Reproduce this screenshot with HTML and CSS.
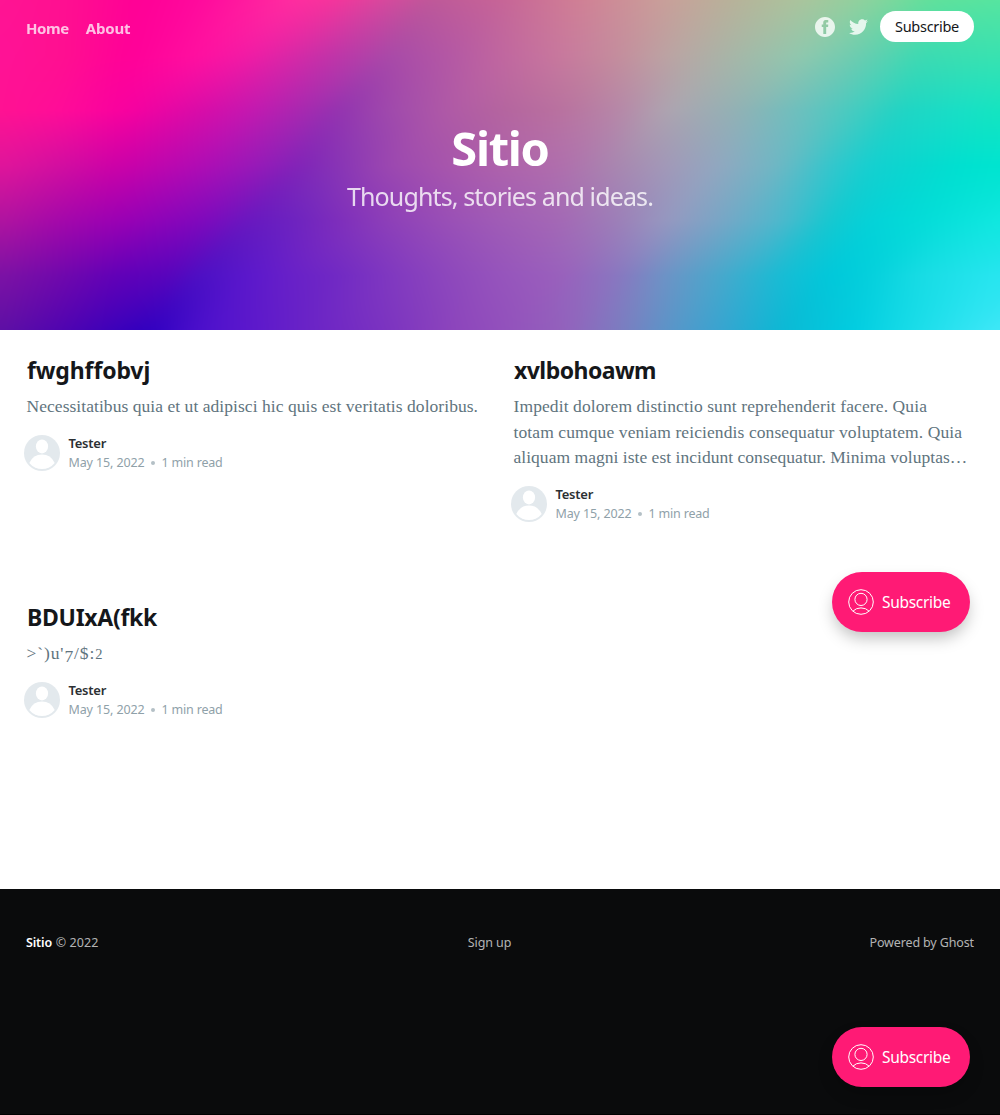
FILE: index.html
```html
<!DOCTYPE html>
<html lang="en">
<head>
<meta charset="utf-8">
<title>Sitio</title>
<link rel="stylesheet" href="styles.css">
</head>
<body>
<svg class="sprite" aria-hidden="true">
  <symbol id="avatar" viewBox="0 0 36 36">
    <circle cx="18" cy="18" r="18" fill="#e3e9ed"/>
    <ellipse cx="18" cy="11.4" rx="6.1" ry="7" fill="#fff"/>
    <path d="M5.3 28Q9.3 19.6 18 19.6T30.7 28A16.4 16.4 0 0 1 5.3 28z" fill="#fff"/>
  </symbol>
  <symbol id="member" viewBox="0 0 26 26">
    <g fill="none" stroke="#fff" stroke-width="1">
      <circle cx="13" cy="13" r="12.3"/>
      <circle cx="13" cy="10.4" r="6.1"/>
      <path d="M4.9 22.2Q8 18.9 13 18.9T21.1 22.2"/>
    </g>
  </symbol>
</svg>

<header class="cover">
  <canvas class="mesh" width="1000" height="330" aria-hidden="true"></canvas>
  <nav class="nav">
    <div class="nav-links">
      <a class="home">Home</a>
      <a>About</a>
    </div>
    <div class="nav-actions">
      <svg class="facebook" viewBox="0 0 32 32"><path d="M16 0c8.837 0 16 7.163 16 16s-7.163 16-16 16S0 24.837 0 16 7.163 0 16 0zm5.204 4.911h-3.546c-2.103 0-4.443.885-4.443 3.934.01 1.062 0 2.08 0 3.225h-2.433v3.872h2.509v11.147h4.61v-11.22h3.042l.275-3.81h-3.397s.007-1.695 0-2.187c0-1.205 1.253-1.136 1.329-1.136h2.054V4.911z"/></svg>
      <svg class="twitter" viewBox="0 2 24 20"><path d="M24 4.557c-.883.392-1.832.656-2.828.775 1.017-.609 1.798-1.574 2.165-2.724-.951.564-2.005.974-3.127 1.195-.897-.957-2.178-1.555-3.594-1.555-3.179 0-5.515 2.966-4.797 6.045-4.091-.205-7.719-2.165-10.148-5.144-1.29 2.213-.669 5.108 1.523 6.574-.806-.026-1.566-.247-2.229-.616-.054 2.281 1.581 4.415 3.949 4.89-.693.188-1.452.232-2.224.084.626 1.956 2.444 3.379 4.6 3.419-2.07 1.623-4.678 2.348-7.29 2.04 2.179 1.397 4.768 2.212 7.548 2.212 9.142 0 14.307-7.721 13.995-14.646.962-.695 1.797-1.562 2.457-2.549z"/></svg>
      <a class="nav-button">Subscribe</a>
    </div>
  </nav>
  <div class="hero">
    <h1>Sitio</h1>
    <p>Thoughts, stories and ideas.</p>
  </div>
</header>

<main class="feed">
  <article class="card">
    <h2 class="t-first">fwghffobvj</h2>
    <p class="excerpt">Necessitatibus quia et ut adipisci hic quis est veritatis doloribus.</p>
    <div class="byline">
      <svg class="avatar"><use href="#avatar"/></svg>
      <div>
        <div class="author">Tester</div>
        <div class="meta"><span>May 15, 2022</span><i class="dot"></i><span class="read">1 min read</span></div>
      </div>
    </div>
  </article>
  <article class="card">
    <h2 class="t-second">xvlbohoawm</h2>
    <p class="excerpt excerpt-long">Impedit dolorem distinctio sunt reprehenderit facere. Quia<br>totam cumque veniam reiciendis consequatur voluptatem. Quia<br><span class="last-line">aliquam magni iste est incidunt consequatur. Minima voluptas…</span></p>
    <div class="byline">
      <svg class="avatar"><use href="#avatar"/></svg>
      <div>
        <div class="author">Tester</div>
        <div class="meta"><span>May 15, 2022</span><i class="dot"></i><span class="read">1 min read</span></div>
      </div>
    </div>
  </article>
  <article class="card">
    <h2 class="t-third">BDUIxA(fkk</h2>
    <p class="excerpt excerpt-symbols">&gt;`)u'<span class="old">7</span>/$:<span class="small">2</span></p>
    <div class="byline">
      <svg class="avatar"><use href="#avatar"/></svg>
      <div>
        <div class="author">Tester</div>
        <div class="meta"><span>May 15, 2022</span><i class="dot"></i><span class="read">1 min read</span></div>
      </div>
    </div>
  </article>
</main>

<footer class="footer">
  <div><strong>Sitio</strong> <span class="copy">© 2022</span></div>
  <a class="signup">Sign up</a>
  <a class="powered">Powered by Ghost</a>
</footer>

<a class="portal portal-upper"><svg><use href="#member"/></svg><span>Subscribe</span></a>
<a class="portal portal-lower"><svg><use href="#member"/></svg><span>Subscribe</span></a>
<script src="mesh.js"></script>
</body>
</html>
```
FILE: mesh.js
```js
// Paints the cover's colour mesh: seven evenly spaced rows of colour stops,
// blended vertically along slanted lines so that the ridges run diagonally.
const rows = [
  '0 ff1493,60 ff1090,140 ff0096,200 ff0a9d,290 ff2ca0,333 f4349c,390 d24b9d,430 bd5899,500 c66497,580 d08095,666 c8a09a,740 b5b49a,800 aac49d,860 8fd19e,930 5fe09c,1000 55e5a0',
  '0 ff1296,60 ff1090,130 ff0098,200 ff10a0,250 f01ca5,333 c034a8,390 a84aa8,450 b458a4,500 c0669f,560 c8789d,620 c48e9d,666 bca3a3,740 a4b8a8,800 90c8ae,860 6acdb0,920 3cdab2,1000 38e3b0',
  '0 ff1292,60 ff0c98,125 f8009f,200 d80ca8,250 c418b0,300 a828b0,340 9234b0,390 a04aac,450 b05aa6,500 b4649f,560 b9719f,620 b688a8,666 aea4b0,740 90b2b5,800 6cc0be,850 48cbc0,900 20d4c4,960 18dfc6,1000 14e5c0',
  '0 e0159a,60 d20ea0,120 cc00a8,200 b00cb4,250 9a18b8,300 8024b8,333 8632b6,390 9c48b0,450 a856ac,500 ae62ab,560 b06eac,620 a888b0,666 a299b8,720 90a8c0,780 6cb8c4,830 34c6cc,870 14d0d0,920 08d8cf,960 00e0d0,1000 00e5d0',
  '0 b0149f,60 a408aa,120 9a00b4,200 8008bc,250 6818c0,290 6c22c0,333 7c2cbc,390 8e40b8,450 9a50b6,500 a05cb6,560 a468b5,620 9c80b8,666 9698c0,720 78a6c6,780 4eb8cc,830 14c8d0,870 04d2d8,920 04dcd8,1000 10e8e0',
  '0 7c12a4,60 7008ac,120 6000b8,170 5804bc,200 4c10c4,250 5c18cc,290 6820c8,333 7028c4,390 8038c0,450 8e48bc,500 9654bc,560 9a60bc,620 8878c0,666 6c94c6,720 48a8cc,780 18bcd4,830 00c8da,870 04d0dc,920 18dce4,1000 28e6f0',
  '0 5e10a4,60 5004b0,125 3800bc,150 3000c0,200 4c10cc,250 5c18cc,333 7028c4,390 7c34c0,450 8c44bc,500 9250bc,560 9460bc,620 7c7cc0,666 5c94c8,720 38a4d0,780 0cb8d4,850 00cce0,910 18dce8,1000 40e8f8'
];
const WIDTH = 1000, HEIGHT = 330, STEP = 55;

// Expand each row of stops to one colour per pixel.
const ramps = rows.map(row => {
  const stops = row.split(',').map(s => {
    const [x, hex] = s.split(' ');
    const n = parseInt(hex, 16);
    return [+x, n >> 16, n >> 8 & 255, n & 255];
  });
  const raw = [];
  for (let x = 0, i = 0; x <= WIDTH; x++) {
    if (x > stops[i + 1][0]) i++;
    const a = stops[i], b = stops[i + 1], t = (x - a[0]) / (b[0] - a[0]);
    raw.push([1, 2, 3].map(c => a[c] + (b[c] - a[c]) * t));
  }
  // Soften the joints between stops.
  return raw.map((_, x) => [0, 1, 2].map(c => {
    let sum = 0;
    for (let d = -16; d <= 16; d++) sum += raw[Math.max(0, Math.min(WIDTH, x + d))][c];
    return sum / 33;
  }));
});

function at(row, x) {
  const p = Math.max(0, Math.min(WIDTH - 0.01, x)), i = Math.floor(p), t = p - i;
  return ramps[row][i].map((v, c) => v + (ramps[row][i + 1][c] - v) * t);
}

const slants = [[0, 0.1], [100, 0.25], [220, 0.85], [450, 0.85], [600, 0.6], [1000, 0.6]];
function slant(x) {
  const i = slants.findIndex(s => s[0] > x);
  const a = slants[i - 1], b = slants[i];
  return a[1] + (b[1] - a[1]) * (x - a[0]) / (b[0] - a[0]);
}

const ctx = document.querySelector('.mesh').getContext('2d');
const image = ctx.createImageData(WIDTH, HEIGHT);
for (let x = 0; x < WIDTH; x++) {
  const s = slant(x);
  for (let y = 0; y < HEIGHT; y++) {
    const k = Math.floor(y / STEP), dy = y - k * STEP, t = dy / STEP;
    const a = at(k, x + s * dy), b = at(k + 1, x + s * (dy - STEP));
    const o = (y * WIDTH + x) * 4;
    for (let c = 0; c < 3; c++) image.data[o + c] = a[c] + (b[c] - a[c]) * t;
    image.data[o + 3] = 255;
  }
}
ctx.putImageData(image, 0, 0);
```
FILE: styles.css
```css
* { box-sizing: border-box; }
body {
  margin: 0;
  position: relative;
  background: #fff;
  color: #15171a;
  font-family: "Noto Sans", "Open Sans", sans-serif;
}
h1, h2, p { margin: 0; }
svg { display: block; flex: none; }
.sprite { position: absolute; width: 0; height: 0; }

/* Cover */
.cover { position: relative; height: 330px; overflow: hidden; color: #fff; background: #a05cb6; }
.mesh { position: absolute; inset: 0; width: 100%; height: 100%; }

.nav {
  position: relative;
  display: flex;
  justify-content: space-between;
  align-items: center;
  padding: 11px 26px 0;
  height: 42px;
}
.nav-links { display: flex; gap: 17px; font-size: 15px; font-weight: 700; line-height: 22px; opacity: .75; padding-top: 2px; }
.nav-links a { letter-spacing: -.2px; }
.nav-links .home { letter-spacing: -.4px; }
.nav-actions { display: flex; align-items: center; fill: rgba(255, 255, 255, .8); }
.facebook { width: 20px; height: 20px; margin-right: 14px; }
.twitter { width: 19px; height: 16px; margin-right: 12px; }
.nav-button {
  width: 94px;
  height: 31px;
  border-radius: 16px;
  background: #fff;
  color: #15171a;
  font-size: 14.5px;
  letter-spacing: -.28px;
  line-height: 31px;
  text-align: center;
}
.hero { position: relative; padding-top: 74px; text-align: center; }
.hero h1 { font-size: 47px; font-weight: 700; letter-spacing: -1.3px; line-height: 64px; }
.hero p { margin-top: -1px; font-size: 25px; letter-spacing: -.87px; line-height: 34px; opacity: .8; }

/* Post feed */
.feed {
  display: grid;
  grid-template-columns: 1fr 1fr;
  grid-auto-rows: 246.6px;
  column-gap: 26px;
  height: 559px;
  padding: 26px 26px 0;
}
.card h2 { padding-left: 1px; font-size: 23px; font-weight: 700; letter-spacing: -.12px; line-height: 29px; white-space: nowrap; }
.card .t-second { letter-spacing: -.54px; }
.card .t-third { letter-spacing: -.29px; }
.excerpt {
  margin-top: 9px;
  padding-left: .5px;
  color: #5f747e;
  font-family: "Liberation Serif", serif;
  font-size: 17.5px;
  letter-spacing: .05px;
  line-height: 25.5px;
  white-space: nowrap;
}
.excerpt-long { letter-spacing: .1px; }
.last-line { letter-spacing: .03px; }
.excerpt-symbols { letter-spacing: .9px; }
.old { position: relative; top: 3px; }
.small { font-size: 14.5px; letter-spacing: 0; }
.byline { display: flex; gap: 8.5px; margin: 15px 0 0 -2px; }
.avatar { width: 36px; height: 36px; }
.author { font-size: 13px; font-weight: 600; letter-spacing: -.25px; line-height: 17px; color: #2c3033; }
.meta { display: flex; align-items: center; font-size: 12.5px; letter-spacing: -.12px; line-height: 21px; color: #8fa1a9; }
.read { letter-spacing: -.19px; }
.dot { width: 4px; height: 4px; margin: 1px 7px 0 6px; border-radius: 50%; background: #b4c0c6; }

/* Footer */
.footer {
  display: flex;
  justify-content: space-between;
  height: 226px;
  padding: 44px 26px 0;
  border-bottom: 1px solid #000;
  background: #0a0b0c;
  color: rgba(255, 255, 255, .7);
  font-size: 12.5px;
  line-height: 20px;
}
.footer strong { color: #fff; font-weight: 600; letter-spacing: -.15px; }
.copy { letter-spacing: .1px; padding-left: .5px; }
.signup { padding-left: 11px; letter-spacing: -.09px; }
.powered { letter-spacing: -.13px; }

/* Floating membership buttons */
.portal {
  position: absolute;
  right: 30px;
  display: flex;
  align-items: center;
  gap: 8px;
  width: 138px;
  height: 60px;
  padding-left: 16px;
  border-radius: 30px;
  background: #ff1a75;
  box-shadow: 0 8px 16px -2px rgba(0, 0, 0, .25);
  color: #fff;
  font-size: 15.5px;
  letter-spacing: -.3px;
}
.portal svg { width: 26px; height: 26px; }
.portal-upper { top: 572px; }
.portal-lower { top: 1027px; }
```
